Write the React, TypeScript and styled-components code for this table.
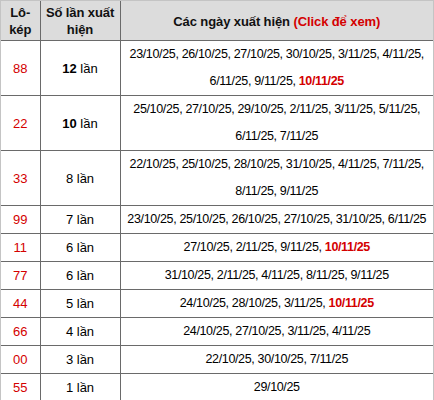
import React from 'react';
import styled, { createGlobalStyle } from 'styled-components';

const RED = '#d40000';

const GlobalStyle = createGlobalStyle`
  html, body {
    margin: 0;
    padding: 0;
    background: #fff;
  }
  body {
    font-family: "Liberation Sans", Arial, sans-serif;
    color: #000;
  }
`;

interface Entry {
  lo: string;
  count: number;
  strong?: boolean;
  dates: string[];
  hot?: string;
}

const entries: Entry[] = [
  {
    lo: '88',
    count: 12,
    strong: true,
    dates: ['23/10/25', '26/10/25', '27/10/25', '30/10/25', '3/11/25', '4/11/25', '6/11/25', '9/11/25'],
    hot: '10/11/25',
  },
  {
    lo: '22',
    count: 10,
    strong: true,
    dates: ['25/10/25', '27/10/25', '29/10/25', '2/11/25', '3/11/25', '5/11/25', '6/11/25', '7/11/25'],
  },
  {
    lo: '33',
    count: 8,
    dates: ['22/10/25', '25/10/25', '28/10/25', '31/10/25', '4/11/25', '7/11/25', '8/11/25', '9/11/25'],
  },
  {
    lo: '99',
    count: 7,
    dates: ['23/10/25', '25/10/25', '26/10/25', '27/10/25', '31/10/25', '6/11/25'],
  },
  { lo: '11', count: 6, dates: ['27/10/25', '2/11/25', '9/11/25'], hot: '10/11/25' },
  { lo: '77', count: 6, dates: ['31/10/25', '2/11/25', '4/11/25', '8/11/25', '9/11/25'] },
  { lo: '44', count: 5, dates: ['24/10/25', '28/10/25', '3/11/25'], hot: '10/11/25' },
  { lo: '66', count: 4, dates: ['24/10/25', '27/10/25', '3/11/25', '4/11/25'] },
  { lo: '00', count: 3, dates: ['22/10/25', '30/10/25', '7/11/25'] },
  { lo: '55', count: 1, dates: ['29/10/25'] },
];

const Frame = styled.div`
  box-sizing: border-box;
  width: 434px;
  border: 1px solid #c4c4c4;
`;

const Table = styled.table`
  width: 100%;
  table-layout: fixed;
  border-collapse: collapse;
  border-style: hidden;
  font-size: 12.5px;
  letter-spacing: -0.35px;
`;

const HeadCell = styled.th`
  background: #dcdcdc;
  border: 1px solid #6a6a6a;
  padding: 3px 3px 2px;
  line-height: 17px;
  font-size: 13px;
  font-weight: bold;
  letter-spacing: -0.1px;
  color: #111;
  text-align: center;
  vertical-align: middle;
`;

const Cell = styled.td`
  border: 1px solid #6a6a6a;
  padding: 0 4px;
  line-height: 27px;
  text-align: center;
  vertical-align: middle;
`;

const LoCell = styled(Cell)`
  color: ${RED};
  font-size: 13px;
  letter-spacing: 0;
`;

const CountCell = styled(Cell)`
  font-size: 13px;
  letter-spacing: 0;
`;

const Num = styled.span<{ $strong?: boolean }>`
  font-weight: ${({ $strong }) => ($strong ? 'bold' : 'normal')};
`;

const Red = styled.span`
  color: ${RED};
  font-weight: bold;
`;

const App: React.FC = () => (
  <>
    <GlobalStyle />
    <Frame>
      <Table>
        <colgroup>
          <col style={{ width: 39 }} />
          <col style={{ width: 80 }} />
          <col />
        </colgroup>
        <thead>
          <tr>
            <HeadCell>Lô-kép</HeadCell>
            <HeadCell>Số lần xuất hiện</HeadCell>
            <HeadCell>
              Các ngày xuất hiện <Red>(Click để xem)</Red>
            </HeadCell>
          </tr>
        </thead>
        <tbody>
          {entries.map(item => (
            <tr key={item.lo}>
              <LoCell>{item.lo}</LoCell>
              <CountCell>
                <Num $strong={item.strong}>{item.count}</Num> lần
              </CountCell>
              <Cell>
                {item.dates.join(', ')}
                {item.hot && (
                  <>
                    , <Red>{item.hot}</Red>
                  </>
                )}
              </Cell>
            </tr>
          ))}
        </tbody>
      </Table>
    </Frame>
  </>
);

export default App;
